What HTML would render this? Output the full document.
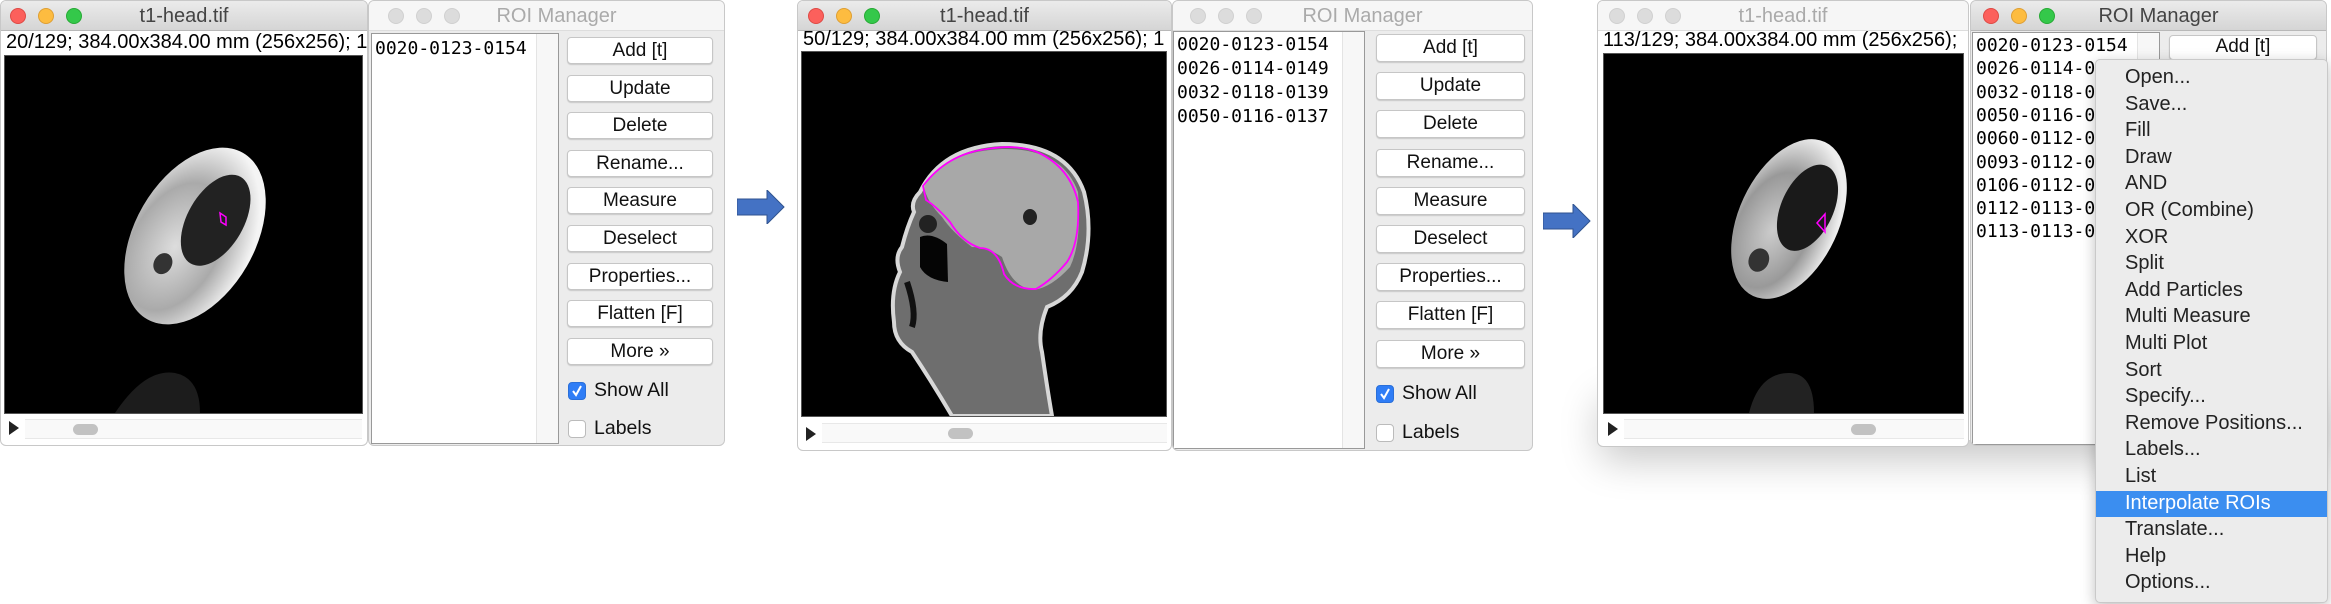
<!DOCTYPE html>
<html><head><meta charset="utf-8"><style>
*{margin:0;padding:0;box-sizing:border-box}
body{width:2331px;height:604px;background:#fff;position:relative;overflow:hidden;font-family:"Liberation Sans",sans-serif}
.a{position:absolute}
.win{position:absolute;background:#ececec;border-radius:6px;overflow:hidden;border:1px solid #c8c8c8}
.tb{position:absolute;left:0;top:0;right:0;height:30px;background:linear-gradient(#ebebeb,#d5d5d5);border-bottom:1px solid #b8b8b8}
.tb.in{background:#f6f6f6;border-bottom:1px solid #ddd}
.tt{position:absolute;left:0;right:0;top:4px;text-align:center;font-size:20px;color:#444}
.in .tt{color:#aaa}
.dot{position:absolute;top:7px;width:16px;height:16px;border-radius:50%}
.r{background:#fc605c;border:1px solid #de4a45}.y{background:#fdbc40;border:1px solid #de9f34}.g{background:#34c84a;border:1px solid #27aa35}
.in .dot{background:#dcdcdc;border:1px solid #d0d0d0}
.st{position:absolute;left:5px;font-size:20px;color:#000;white-space:nowrap}
.img{position:absolute;background:#000;border:1px solid #555}
.list{position:absolute;background:#fff;border:1px solid #999}
.list .sb{position:absolute;right:0;top:0;bottom:0;width:22px;background:#f7f7f7;border-left:1px solid #e4e4e4}
.li{position:absolute;left:3px;font-family:"DejaVu Sans Mono","Liberation Mono",monospace;font-size:18px;color:#000;white-space:nowrap}
.btn{position:absolute;background:#fff;border:1px solid #c6c6c6;border-radius:4px;box-shadow:0 1px 1px rgba(0,0,0,.15);text-align:center;font-size:19px;line-height:25px;color:#111}
.cb{position:absolute;width:18px;height:18px;border-radius:4px;border:1px solid #bbb;background:#fff}
.cb.on{background:#2f7df6;border-color:#2a6fd9}
.cl{position:absolute;font-size:19.5px;color:#111}
.tri{position:absolute;width:0;height:0;border-top:7px solid transparent;border-bottom:7px solid transparent;border-left:10px solid #222}
.track{position:absolute;background:#f9f9f9;border-top:1px solid #e8e8e8;border-bottom:1px solid #e8e8e8}
.thumb{position:absolute;height:11px;width:25px;border-radius:6px;background:#c2c2c2}
.menu{position:absolute;left:2095px;top:59px;width:233px;height:544px;background:#ececec;border:1px solid #c9c9c9;border-radius:5px;box-shadow:0 4px 14px rgba(0,0,0,.25)}
.mi{position:absolute;left:29px;font-size:20px;color:#222;white-space:nowrap}
.hl{position:absolute;left:0;right:0;top:431px;height:26px;background:#3b8ef0}
</style></head><body>

<!-- ===== Window 1 ===== -->
<div class="win" style="left:0;top:0;width:368px;height:446px;background:#fff">
 <div class="tb"><div class="dot r" style="left:9px"></div><div class="dot y" style="left:37px"></div><div class="dot g" style="left:65px"></div><div class="tt">t1-head.tif</div></div>
 <div class="st" style="top:30px">20/129; 384.00x384.00 mm (256x256); 1</div>
 <div class="img" style="left:3px;top:54px;width:359px;height:359px">
  <svg width="357" height="357">
   <defs><radialGradient id="h1" cx="40%" cy="60%" r="60%"><stop offset="0" stop-color="#ddd"/><stop offset=".6" stop-color="#aaa"/><stop offset="1" stop-color="#f4f4f4"/></radialGradient></defs>
   <g transform="translate(190,180) rotate(30)">
    <ellipse cx="0" cy="0" rx="60" ry="96" fill="url(#h1)"/>
    <ellipse cx="10" cy="-24" rx="28" ry="50" fill="#222"/>
    <ellipse cx="-14" cy="40" rx="9" ry="11" fill="#333"/>
   </g>
   <path d="M215 157 l6 4 l0 8 l-5 -3z" stroke="#f0f" fill="none" stroke-width="1.5"/>
   <path d="M110 357 q30 -45 60 -40 q25 5 25 40z" fill="#1c1c1c"/>
  </svg>
 </div>
 <div class="tri" style="left:8px;top:420px"></div>
 <div class="track" style="left:24px;top:418px;width:337px;height:20px"></div>
 <div class="thumb" style="left:72px;top:423px"></div>
</div>

<!-- ===== ROI Manager 1 ===== -->
<div class="win" style="left:368px;top:0;width:357px;height:446px">
 <div class="tb in"><div class="dot" style="left:19px"></div><div class="dot" style="left:47px"></div><div class="dot" style="left:75px"></div><div class="tt" style="padding-left:20px">ROI Manager</div></div>
 <div class="list" style="left:2px;top:32px;width:188px;height:411px"><div class="sb"></div>
  <div class="li" style="top:4px">0020-0123-0154</div></div>
 <div class="btn" style="left:198px;top:36px;width:146px;height:27px">Add [t]</div>
 <div class="btn" style="left:198px;top:73.6px;width:146px;height:27px">Update</div>
 <div class="btn" style="left:198px;top:111.2px;width:146px;height:27px">Delete</div>
 <div class="btn" style="left:198px;top:148.8px;width:146px;height:27px">Rename...</div>
 <div class="btn" style="left:198px;top:186.4px;width:146px;height:27px">Measure</div>
 <div class="btn" style="left:198px;top:224px;width:146px;height:27px">Deselect</div>
 <div class="btn" style="left:198px;top:261.6px;width:146px;height:27px">Properties...</div>
 <div class="btn" style="left:198px;top:299.2px;width:146px;height:27px">Flatten [F]</div>
 <div class="btn" style="left:198px;top:336.8px;width:146px;height:27px">More »</div>
 <div class="cb on" style="left:199px;top:381px"><svg width="16" height="16"><path d="M4 8 l3 4 l5 -9" stroke="#fff" stroke-width="2" fill="none"/></svg></div>
 <div class="cl" style="left:225px;top:378px">Show All</div>
 <div class="cb" style="left:199px;top:419px"></div>
 <div class="cl" style="left:225px;top:416px">Labels</div>
</div>

<!-- arrow 1 -->
<svg class="a" style="left:737px;top:190px" width="48" height="34"><path d="M0 9 H30 V0 L47 17 L30 34 V25 H0z" fill="#4472c4" stroke="#2f528f" stroke-width="1"/></svg>

<!-- ===== Window 2 ===== -->
<div class="win" style="left:797px;top:0;width:375px;height:451px;background:#fff">
 <div class="tb"><div class="dot r" style="left:10px"></div><div class="dot y" style="left:38px"></div><div class="dot g" style="left:66px"></div><div class="tt">t1-head.tif</div></div>
 <div class="st" style="top:27px">50/129; 384.00x384.00 mm (256x256); 1</div>
 <div class="img" style="left:3px;top:50px;width:366px;height:366px">
  <svg width="364" height="364">
   <path d="M118 140 Q140 95 200 92 Q265 92 282 140 Q292 180 280 220 Q270 245 245 255 Q235 280 240 300 Q245 335 250 364 H150 Q130 330 110 300 Q92 290 92 270 Q88 240 98 220 Q92 205 100 195 Q105 175 112 160 Q108 150 118 140z" fill="#6e6e6e" stroke="#d8d8d8" stroke-width="4"/>
   <path d="M122 135 Q140 100 200 97 Q260 96 276 140 Q280 190 268 215 Q250 235 232 238 Q210 236 200 205 Q185 195 170 195 Q150 180 140 165 Q125 150 122 135z" fill="#a8a8a8"/>
   <ellipse cx="126" cy="172" rx="9" ry="9" fill="#222"/>
   <path d="M118 185 Q130 180 145 192 L146 230 Q125 228 118 215z" fill="#050505"/>
   <path d="M105 230 Q115 260 110 275" stroke="#111" stroke-width="6" fill="none"/>
   <ellipse cx="228" cy="165" rx="7" ry="8" fill="#222"/>
   <path d="M121 134 Q145 102 185 97 Q215 92 235 100 Q268 115 276 150 Q278 190 265 210 Q250 228 234 237 Q212 238 202 222 Q196 196 178 196 Q160 190 148 170 Q135 155 124 148z" fill="none" stroke="#f0f" stroke-width="1.8"/>
  </svg>
 </div>
 <div class="tri" style="left:8px;top:426px"></div>
 <div class="track" style="left:24px;top:422px;width:345px;height:20px"></div>
 <div class="thumb" style="left:150px;top:427px"></div>
</div>

<!-- ===== ROI Manager 2 ===== -->
<div class="win" style="left:1172px;top:0;width:361px;height:451px">
 <div class="tb in"><div class="dot" style="left:17px"></div><div class="dot" style="left:45px"></div><div class="dot" style="left:73px"></div><div class="tt" style="padding-left:20px">ROI Manager</div></div>
 <div class="list" style="left:0;top:30px;width:192px;height:418px"><div class="sb"></div>
  <div class="li" style="top:2px">0020-0123-0154</div>
  <div class="li" style="top:26px">0026-0114-0149</div>
  <div class="li" style="top:50px">0032-0118-0139</div>
  <div class="li" style="top:74px">0050-0116-0137</div></div>
 <div class="btn" style="left:203px;top:33px;width:149px;height:28px">Add [t]</div>
 <div class="btn" style="left:203px;top:71.2px;width:149px;height:28px">Update</div>
 <div class="btn" style="left:203px;top:109.4px;width:149px;height:28px">Delete</div>
 <div class="btn" style="left:203px;top:147.6px;width:149px;height:28px">Rename...</div>
 <div class="btn" style="left:203px;top:185.8px;width:149px;height:28px">Measure</div>
 <div class="btn" style="left:203px;top:224px;width:149px;height:28px">Deselect</div>
 <div class="btn" style="left:203px;top:262.2px;width:149px;height:28px">Properties...</div>
 <div class="btn" style="left:203px;top:300.4px;width:149px;height:28px">Flatten [F]</div>
 <div class="btn" style="left:203px;top:338.6px;width:149px;height:28px">More »</div>
 <div class="cb on" style="left:203px;top:384px"><svg width="16" height="16"><path d="M4 8 l3 4 l5 -9" stroke="#fff" stroke-width="2" fill="none"/></svg></div>
 <div class="cl" style="left:229px;top:381px">Show All</div>
 <div class="cb" style="left:203px;top:423px"></div>
 <div class="cl" style="left:229px;top:420px">Labels</div>
</div>

<!-- arrow 2 -->
<svg class="a" style="left:1543px;top:204px" width="48" height="34"><path d="M0 9 H30 V0 L47 17 L30 34 V25 H0z" fill="#4472c4" stroke="#2f528f" stroke-width="1"/></svg>

<!-- shadow for third screenshot -->
<div class="a" style="left:1600px;top:380px;width:720px;height:60px;box-shadow:0 20px 40px rgba(0,0,0,.22);border-radius:8px"></div>

<!-- ===== Window 3 ===== -->
<div class="win" style="left:1597px;top:0;width:372px;height:447px;background:#fff">
 <div class="tb in"><div class="dot" style="left:11px"></div><div class="dot" style="left:39px"></div><div class="dot" style="left:67px"></div><div class="tt">t1-head.tif</div></div>
 <div class="st" style="top:28px">113/129; 384.00x384.00 mm (256x256);</div>
 <div class="img" style="left:5px;top:52px;width:361px;height:361px">
  <svg width="359" height="359">
   <defs><radialGradient id="h3" cx="40%" cy="60%" r="60%"><stop offset="0" stop-color="#ccc"/><stop offset=".6" stop-color="#999"/><stop offset="1" stop-color="#eee"/></radialGradient></defs>
   <g transform="translate(185,165) rotate(25)">
    <ellipse cx="0" cy="0" rx="50" ry="85" fill="url(#h3)"/>
    <ellipse cx="12" cy="-18" rx="26" ry="46" fill="#1a1a1a"/>
    <ellipse cx="-10" cy="50" rx="10" ry="12" fill="#333"/>
   </g>
   <path d="M221 160 l-8 9 l8 9z" stroke="#f0f" fill="none" stroke-width="1.5"/>
   <path d="M145 359 q10 -40 40 -40 q25 0 25 40z" fill="#222"/>
  </svg>
 </div>
 <div class="tri" style="left:10px;top:421px"></div>
 <div class="track" style="left:26px;top:418px;width:340px;height:20px"></div>
 <div class="thumb" style="left:253px;top:423px"></div>
</div>

<!-- ===== ROI Manager 3 ===== -->
<div class="win" style="left:1970px;top:0;width:357px;height:446px">
 <div class="tb"><div class="dot r" style="left:12px"></div><div class="dot y" style="left:40px"></div><div class="dot g" style="left:68px"></div><div class="tt" style="padding-left:20px">ROI Manager</div></div>
 <div class="list" style="left:1px;top:31px;width:188px;height:413px"><div class="sb"></div>
  <div class="li" style="top:2px">0020-0123-0154</div>
  <div class="li" style="top:25.3px">0026-0114-0149</div>
  <div class="li" style="top:48.6px">0032-0118-0139</div>
  <div class="li" style="top:71.9px">0050-0116-0137</div>
  <div class="li" style="top:95.2px">0060-0112-0137</div>
  <div class="li" style="top:118.5px">0093-0112-0137</div>
  <div class="li" style="top:141.8px">0106-0112-0137</div>
  <div class="li" style="top:165.1px">0112-0113-0137</div>
  <div class="li" style="top:188.4px">0113-0113-0137</div></div>
 <div class="btn" style="left:198px;top:34px;width:148px;height:25px;line-height:22px">Add [t]</div>
</div>

<!-- menu -->
<div class="menu">
 <div class="hl"></div>
 <div class="mi" style="top:6px">Open...</div>
 <div class="mi" style="top:32.6px">Save...</div>
 <div class="mi" style="top:59.2px">Fill</div>
 <div class="mi" style="top:85.8px">Draw</div>
 <div class="mi" style="top:112.4px">AND</div>
 <div class="mi" style="top:139px">OR (Combine)</div>
 <div class="mi" style="top:165.6px">XOR</div>
 <div class="mi" style="top:192.2px">Split</div>
 <div class="mi" style="top:218.8px">Add Particles</div>
 <div class="mi" style="top:245.4px">Multi Measure</div>
 <div class="mi" style="top:272px">Multi Plot</div>
 <div class="mi" style="top:298.6px">Sort</div>
 <div class="mi" style="top:325.2px">Specify...</div>
 <div class="mi" style="top:351.8px">Remove Positions...</div>
 <div class="mi" style="top:378.4px">Labels...</div>
 <div class="mi" style="top:405px">List</div>
 <div class="mi" style="top:431.6px;color:#fff">Interpolate ROIs</div>
 <div class="mi" style="top:458.2px">Translate...</div>
 <div class="mi" style="top:484.8px">Help</div>
 <div class="mi" style="top:511.4px">Options...</div>
</div>
</body></html>
